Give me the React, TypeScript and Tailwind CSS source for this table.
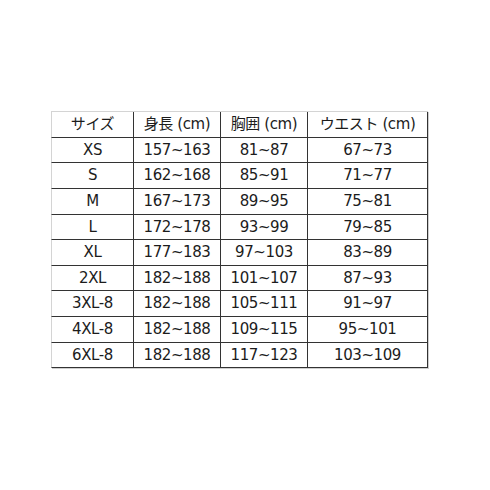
const header = ["サイズ", "身長 (cm)", "胸囲 (cm)", "ウエスト (cm)"];

const rows = [
  ["XS", "157~163", "81~87", "67~73"],
  ["S", "162~168", "85~91", "71~77"],
  ["M", "167~173", "89~95", "75~81"],
  ["L", "172~178", "93~99", "79~85"],
  ["XL", "177~183", "97~103", "83~89"],
  ["2XL", "182~188", "101~107", "87~93"],
  ["3XL-8", "182~188", "105~111", "91~97"],
  ["4XL-8", "182~188", "109~115", "95~101"],
  ["6XL-8", "182~188", "117~123", "103~109"],
];

// heights include the 1px bottom line
const rowHeights = ["h-[25px]", "h-[26px]", "h-[26px]", "h-[25px]", "h-[26px]", "h-[25px]", "h-[26px]", "h-[26px]", "h-[25px]"];
const colWidths = ["w-[83px]", "w-[87px]", "w-[87px]", "w-[120px]"];

const App = () => {
  return (
    <div
      className="w-[490px] h-[490px] bg-white pt-[111px] pl-[51px] text-[#1c1c1c] text-[15px] tracking-[-0.4px]"
      style={{ fontFamily: '"DejaVu Sans", "Noto Sans CJK JP", sans-serif' }}
    >
      <div className="flex flex-col w-fit shadow-[1px_1px_0_#cfcfcf]">
        {/* Header */}
        <div className="flex h-[27px] border-t border-[#d4d4d4]">
          {header.map((h, i) => (
            <div
              key={h}
              className={`${colWidths[i]} flex items-center justify-center border-b border-r border-b-[#333333] border-r-[#333333] ${i === 0 ? "border-l border-l-[#d4d4d4]" : ""}`}
            >
              {h}
            </div>
          ))}
        </div>

        {/* Body */}
        {rows.map((r, ri) => (
          <div key={r[0]} className={`flex ${rowHeights[ri]}`}>
            {r.map((c, i) => (
              <div
                key={i}
                className={`${colWidths[i]} flex items-center justify-center border-b border-r border-b-[#333333] border-r-[#333333] ${i === 0 ? "border-l border-l-[#d4d4d4]" : ""}`}
              >
                {c}
              </div>
            ))}
          </div>
        ))}
      </div>
    </div>
  );
};

export default App;
